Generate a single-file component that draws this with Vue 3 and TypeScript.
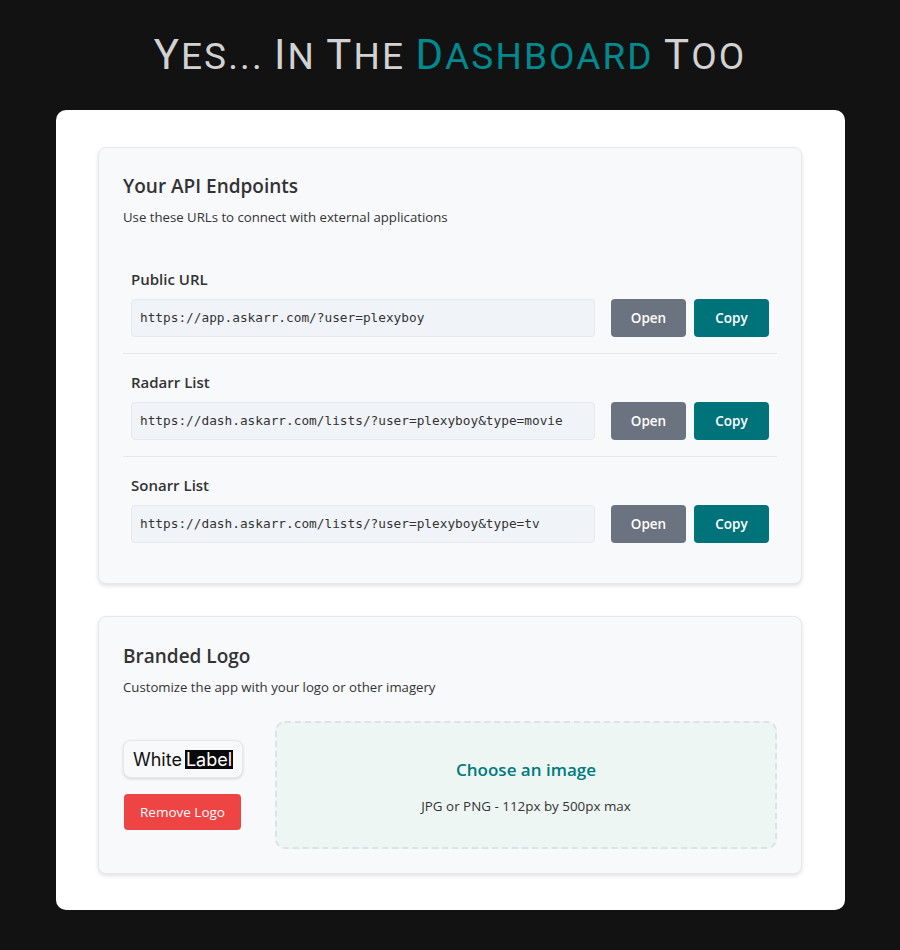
<script setup lang="ts">
interface Endpoint {
  label: string;
  url: string;
}

const endpoints: Endpoint[] = [
  { label: 'Public URL', url: 'https://app.askarr.com/?user=plexyboy' },
  { label: 'Radarr List', url: 'https://dash.askarr.com/lists/?user=plexyboy&type=movie' },
  { label: 'Sonarr List', url: 'https://dash.askarr.com/lists/?user=plexyboy&type=tv' },
];
</script>

<template>
  <div class="page">
    <h1 class="headline"><span class="cap">Y</span>es... <span class="cap">I</span>n <span class="cap">T</span>he <span class="accent"><span class="cap">D</span>ashboard</span> <span class="cap">T</span>oo</h1>

    <main class="sheet">
      <section class="panel">
        <h2 class="panel-title">Your API Endpoints</h2>
        <p class="panel-sub">Use these URLs to connect with external applications</p>

        <div class="rows">
          <div v-for="item in endpoints" :key="item.label" class="row">
            <label class="row-label">{{ item.label }}</label>
            <div class="row-controls">
              <div class="url">{{ item.url }}</div>
              <button class="btn btn-open" type="button">Open</button>
              <button class="btn btn-copy" type="button">Copy</button>
            </div>
          </div>
        </div>
      </section>

      <section class="panel panel-logo">
        <h2 class="panel-title">Branded Logo</h2>
        <p class="panel-sub">Customize the app with your logo or other imagery</p>

        <div class="logo-area">
          <div class="logo-col">
            <div class="logo-box">
              <span class="logo-white">White</span>
              <span class="logo-label">Label</span>
            </div>
            <button class="remove" type="button">Remove Logo</button>
          </div>
          <div class="dropzone">
            <div class="drop-title">Choose an image</div>
            <div class="drop-hint">JPG or PNG - 112px by 500px max</div>
          </div>
        </div>
      </section>
    </main>
  </div>
</template>

<style>
html,
body {
  margin: 0;
  background: #121212;
}
</style>

<style scoped>
.page {
  width: 900px;
  height: 950px;
  background: #121212;
  padding-top: 28px;
  box-sizing: border-box;
  font-family: "Open Sans", "Noto Sans", sans-serif;
  color: #333;
  overflow: hidden;
}

.headline {
  margin: 0;
  height: 82px;
  font-family: "Roboto", sans-serif;
  font-size: 37px;
  line-height: 54px;
  font-weight: 400;
  text-transform: uppercase;
  letter-spacing: 2.1px;
  word-spacing: -1px;
  text-align: center;
  color: #d2d2d2;
}

.cap {
  font-size: 42px;
}

.accent {
  color: #008a90;
}

.sheet {
  width: 789px;
  height: 800px;
  margin-left: 56px;
  padding: 37px 43px 0 42px;
  box-sizing: border-box;
  background: #fff;
  border-radius: 10px;
  display: flex;
  flex-direction: column;
  gap: 32px;
}

.panel {
  padding: 24px;
  background: #f8f9fb;
  border: 1px solid #e6e8ec;
  border-radius: 8px;
  box-shadow: 0 2px 4px rgba(0, 0, 0, 0.12);
}

.panel-logo {
  padding-top: 25px;
}

.panel-title {
  margin: 0 0 7px;
  font-size: 19px;
  line-height: 28px;
  font-weight: 600;
  color: #333;
}

.panel-sub {
  margin: 0;
  font-size: 13.2px;
  line-height: 20px;
  color: #333;
}

.rows {
  margin-top: 24px;
}

.row {
  padding: 16px 8px;
  border-bottom: 1px solid #e6e8ec;
}

.row:last-child {
  border-bottom: none;
}

.row-label {
  display: block;
  margin-bottom: 8px;
  font-size: 15px;
  line-height: 24px;
  font-weight: 600;
  color: #333;
}

.row-controls {
  display: flex;
  gap: 8px;
}

.url {
  width: 464px;
  height: 38px;
  margin-right: 8px;
  padding: 0 8px 2px;
  box-sizing: border-box;
  display: flex;
  align-items: center;
  background: #f0f3f8;
  border: 1px solid #e6e8ec;
  border-radius: 4px;
  font-family: "DejaVu Sans Mono", monospace;
  font-size: 12.77px;
  color: #333;
}

.btn {
  height: 38px;
  border: none;
  border-radius: 4px;
  color: #fff;
  font-family: inherit;
  font-size: 13.5px;
  font-weight: 600;
  padding: 0;
  cursor: pointer;
}

.btn-open {
  width: 75px;
  background: #6b7280;
}

.btn-copy {
  width: 75px;
  background: #00737a;
}

.logo-area {
  margin-top: 24px;
  display: flex;
  align-items: center;
  gap: 32px;
}

.logo-col {
  width: 120px;
  display: flex;
  flex-direction: column;
  align-items: center;
  gap: 16px;
}

.logo-box {
  width: 120px;
  height: 38px;
  box-sizing: border-box;
  display: flex;
  align-items: center;
  justify-content: center;
  gap: 3px;
  background: #f8f9fb;
  border: 1px solid #e6e8ec;
  border-radius: 8px;
  box-shadow: 0 1px 3px rgba(0, 0, 0, 0.15);
  font-family: "Inter", sans-serif;
  font-size: 18px;
  color: #111;
}

.logo-label {
  padding: 0 1px;
  background: #0a0a0a;
  color: #fff;
  line-height: 19px;
}

.remove {
  width: 117px;
  height: 36px;
  margin-right: 1px;
  padding: 0;
  border: none;
  border-radius: 4px;
  background: #ef4444;
  color: #fff;
  font-family: inherit;
  font-size: 13.5px;
  cursor: pointer;
}

.dropzone {
  flex: 1;
  height: 128px;
  padding-top: 3px;
  box-sizing: border-box;
  display: flex;
  flex-direction: column;
  align-items: center;
  justify-content: center;
  gap: 15px;
  background: #eef6f3;
  border: 2px dashed #dbe3e4;
  border-radius: 10px;
}

.drop-title {
  font-size: 17px;
  line-height: 24px;
  font-weight: 600;
  color: #007a80;
}

.drop-hint {
  font-size: 13.4px;
  line-height: 18px;
  color: #333;
}
</style>
